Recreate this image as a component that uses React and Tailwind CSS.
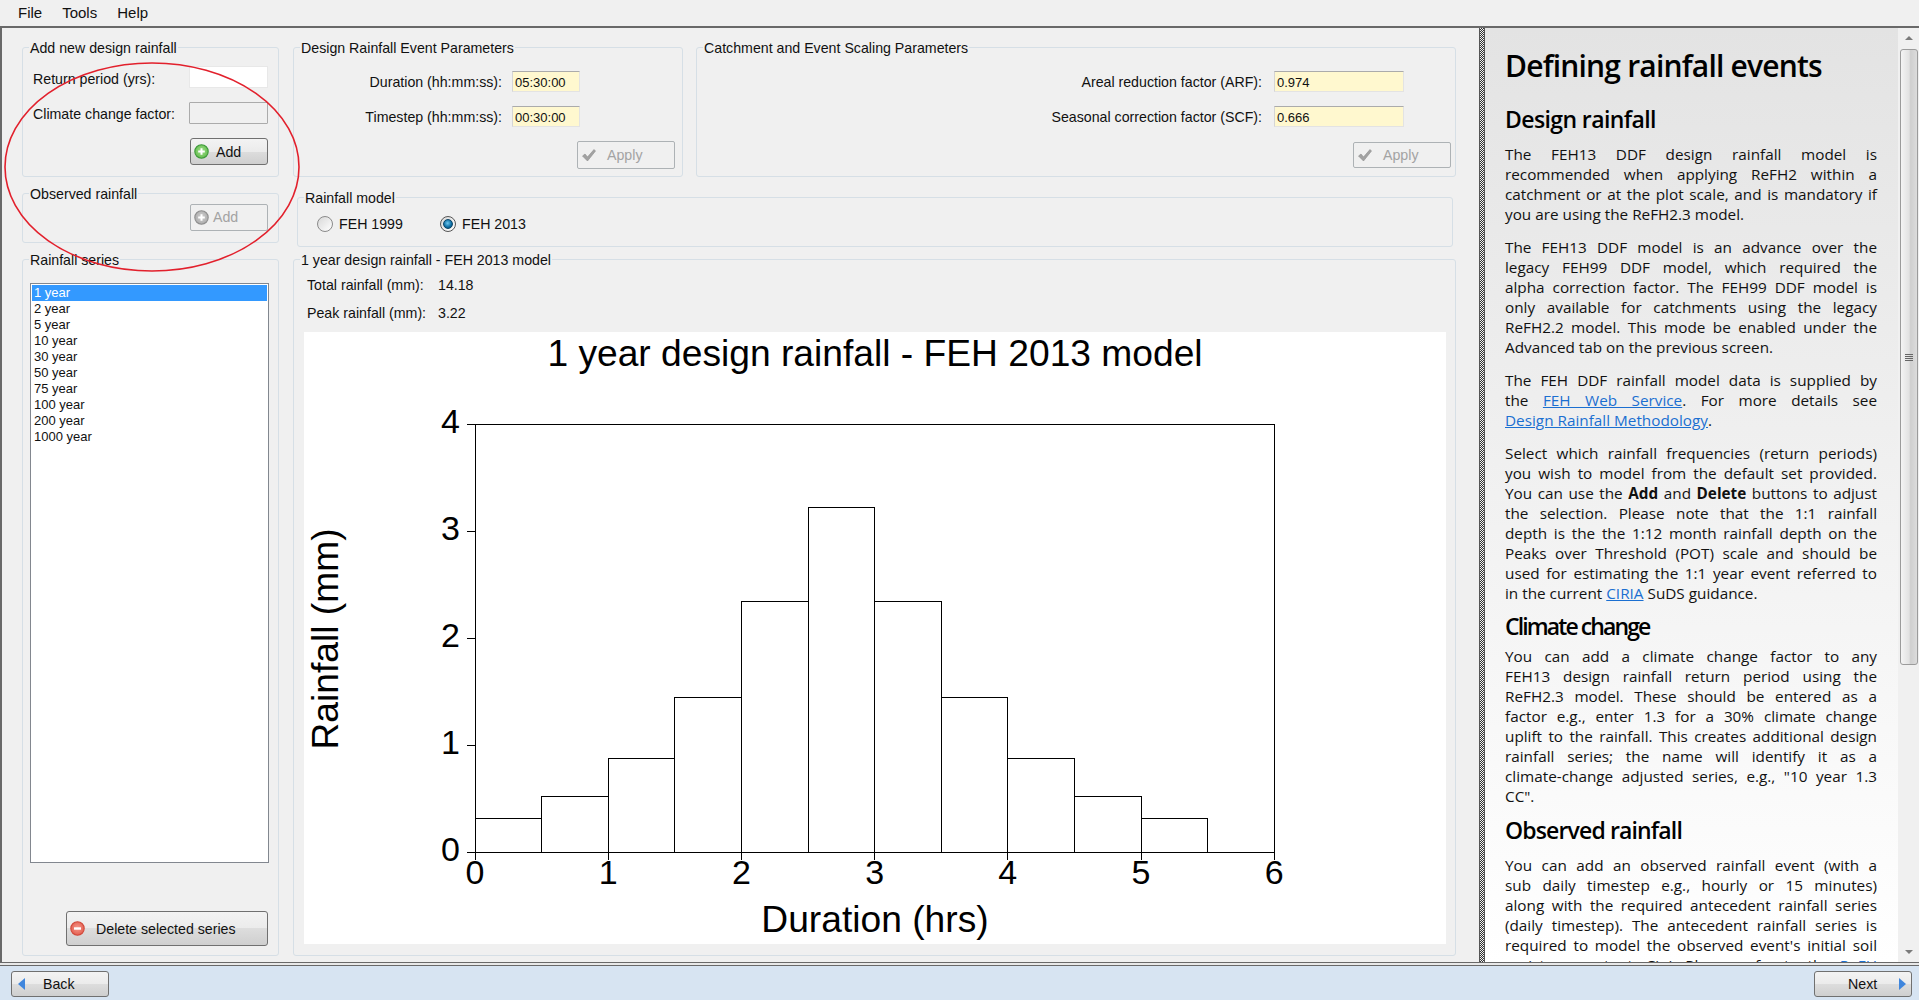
import React from "react";

const btnFace = "bg-[linear-gradient(#f3f3f3_0%,#ebebeb_50%,#dddddd_50%,#cfcfcf_100%)] border border-[#707070] rounded-[3px]";
const subHead = "text-[23px] leading-[28px] font-semibold text-black";

function Group({ title, className = "", children }) {
  return (
    <div className={`relative border border-[#d6dfe6] rounded-[3px] ${className}`}>
      <span className="absolute -top-[9px] left-[6px] bg-[#f0f0f0] px-[1px] leading-[18px] whitespace-nowrap">{title}</span>
      {children}
    </div>
  );
}

function Field({ children, className = "" }) {
  return (
    <div className={`h-[21px] border border-[#e3e3e3] border-t-[#ababab] border-l-[#d5d5d5] leading-[21px] pl-[2px] text-[13px] ${className}`}>
      {children}
    </div>
  );
}

function CircleIcon({ fill, inner, ring, kind }) {
  return (
    <svg width="15" height="15" viewBox="0 0 15 15">
      <defs>
        <radialGradient id={`g-${kind}`} cx="50%" cy="45%" r="60%">
          <stop offset="0%" stopColor={inner} />
          <stop offset="100%" stopColor={fill} />
        </radialGradient>
      </defs>
      <circle cx="7.5" cy="7.5" r="6.7" fill={`url(#g-${kind})`} stroke={ring} strokeWidth="1.1" />
      {kind !== "del" && <path d="M7.5 4.2v6.6M4.2 7.5h6.6" stroke="#fff" strokeWidth="2" />}
      {kind === "del" && <path d="M4 7.5h7" stroke="#fff" strokeWidth="2.4" />}
    </svg>
  );
}

function Check() {
  return (
    <svg width="16" height="14" viewBox="0 0 16 14">
      <path d="M1.5 8l2.5-2 2.5 3L13 1.5l1.5 1.5L6.5 13z" fill="#a2a2a2" stroke="#8d8d8d" strokeWidth="0.6" />
    </svg>
  );
}

function ApplyButton({ className = "" }) {
  return (
    <div className={`flex items-center w-[98px] border border-[#adb2b5] rounded-[2px] text-[#a3a3a3] ${className}`}>
      <span className="ml-[3px] w-[26px] flex"><Check /></span>
      <span className="pt-[1px]">Apply</span>
    </div>
  );
}

function Radio({ checked }) {
  return (
    <span className={`w-[16px] h-[16px] rounded-full border bg-[linear-gradient(135deg,#d8d8d8,#ffffff)] flex items-center justify-center ${checked ? "border-[#555]" : "border-[#8a8a8a]"}`}>
      {checked && <span className="w-[10px] h-[10px] rounded-full border border-[#0a4568] bg-[radial-gradient(circle_at_45%_40%,#6cc6ee,#0c6ca2_60%,#0a4568)]" />}
    </span>
  );
}

function Chart() {
  const x0 = 171, y0 = 520, ux = 133.2, uy = 107;
  const bars = [0.31, 0.52, 0.87, 1.44, 2.34, 3.22, 2.34, 1.44, 0.87, 0.52, 0.31];
  return (
    <svg width="1141" height="612" className="block" fontFamily="'Liberation Sans', sans-serif" fill="#000">
      <text x="571" y="34" fontSize="37.2" textAnchor="middle">1 year design rainfall - FEH 2013 model</text>
      <text x="571" y="600" fontSize="37.2" textAnchor="middle">Duration (hrs)</text>
      <text transform="translate(34 307) rotate(-90)" fontSize="37.2" textAnchor="middle">Rainfall (mm)</text>
      <g stroke="#000" strokeWidth="1" fill="none" shapeRendering="crispEdges">
        <path d={`M${x0} ${y0 - 4 * uy}H${x0 + 6 * ux}V${y0}H${x0}Z`} />
        {bars.map((v, i) => (
          <rect key={i} x={x0 + (i * ux) / 2} y={y0 - v * uy} width={ux / 2} height={v * uy} />
        ))}
        {[0, 1, 2, 3, 4].map((n) => (
          <path key={n} d={`M${x0 - 8} ${y0 - n * uy}H${x0}`} />
        ))}
        {[0, 1, 2, 3, 4, 5, 6].map((n) => (
          <path key={n} d={`M${x0 + n * ux} ${y0}v8`} />
        ))}
      </g>
      {[0, 1, 2, 3, 4].map((n) => (
        <text key={n} x="156" y={y0 - n * uy + 9} fontSize="34" textAnchor="end">{n}</text>
      ))}
      {[0, 1, 2, 3, 4, 5, 6].map((n) => (
        <text key={n} x={x0 + n * ux} y="552" fontSize="34" textAnchor="middle">{n}</text>
      ))}
    </svg>
  );
}

function Para({ lines }) {
  return (
    <div className="mb-[13px]">
      {lines.map((l, i) => (
        <div key={i} className={i < lines.length - 1 ? "text-justify [text-align-last:justify] whitespace-nowrap" : "whitespace-nowrap"}>{l}</div>
      ))}
    </div>
  );
}

function Lnk({ children }) {
  return <span className="text-[#1b6fd1] underline">{children}</span>;
}

function Help() {
  return (
    <div className="flex-1 min-w-0 flex bg-[#f0f0f0] overflow-hidden">
      <div className="w-[413px] shrink-0 bg-[linear-gradient(#e3e3e3,#ffffff)] pl-[20px] pr-[21px] overflow-hidden font-['Open_Sans',sans-serif] text-[15.3px] leading-[20px] text-[#111]">
        <h1 className="text-[30px] leading-[40px] font-semibold mt-[18px] mb-[19px] text-black tracking-[-0.8px] whitespace-nowrap">Defining rainfall events</h1>
        <h2 className={`${subHead} tracking-[-0.6px] mb-[11px]`}>Design rainfall</h2>
        <Para lines={[
          "The FEH13 DDF design rainfall model is",
          "recommended when applying ReFH2 within a",
          "catchment or at the plot scale, and is mandatory if",
          "you are using the ReFH2.3 model.",
        ]} />
        <Para lines={[
          "The FEH13 DDF model is an advance over the",
          "legacy FEH99 DDF model, which required the",
          "alpha correction factor. The FEH99 DDF model is",
          "only available for catchments using the legacy",
          "ReFH2.2 model. This mode be enabled under the",
          "Advanced tab on the previous screen.",
        ]} />
        <Para lines={[
          "The FEH DDF rainfall model data is supplied by",
          <>the <Lnk>FEH Web Service</Lnk>. For more details see</>,
          <><Lnk>Design Rainfall Methodology</Lnk>.</>,
        ]} />
        <Para lines={[
          "Select which rainfall frequencies (return periods)",
          "you wish to model from the default set provided.",
          <>You can use the <b>Add</b> and <b>Delete</b> buttons to adjust</>,
          "the selection. Please note that the 1:1 rainfall",
          "depth is the the 1:12 month rainfall depth on the",
          "Peaks over Threshold (POT) scale and should be",
          "used for estimating the 1:1 year event referred to",
          <>in the current <Lnk>CIRIA</Lnk> SuDS guidance.</>,
        ]} />
        <h2 className={`${subHead} tracking-[-1.9px] -mt-[4px] mb-[6px]`}>Climate change</h2>
        <Para lines={[
          "You can add a climate change factor to any",
          "FEH13 design rainfall return period using the",
          "ReFH2.3 model. These should be entered as a",
          "factor e.g., enter 1.3 for a 30% climate change",
          "uplift to the rainfall. This creates additional design",
          "rainfall series; the name will identify it as a",
          "climate-change adjusted series, e.g., \"10 year 1.3",
          "CC\".",
        ]} />
        <h2 className={`${subHead} tracking-[-0.85px] -mt-[3px] mb-[11px]`}>Observed rainfall</h2>
        <Para lines={[
          "You can add an observed rainfall event (with a",
          "sub daily timestep e.g., hourly or 15 minutes)",
          "along with the required antecedent rainfall series",
          "(daily timestep). The antecedent rainfall series is",
          "required to model the observed event's initial soil",
          <>moisture content, Cini. Please refer to the <Lnk>ReFH</Lnk></>,
          "",
        ]} />
      </div>
      <div className="flex-1 flex flex-col items-center bg-[#f0f0f0] pt-[8px] pb-[8px]">
        <span className="w-0 h-0 border-x-[4px] border-x-transparent border-b-[4px] border-b-[#7a7a7a]" />
        <div className="mt-[9px] w-[18px] h-[616px] border border-[#9b9b9b] rounded-[3px] bg-[linear-gradient(90deg,#f4f4f4_0%,#e2e2e2_50%,#cfcfcf_60%,#dcdcdc_100%)] flex items-center justify-center">
          <span className="flex flex-col gap-[1px]">
            <span className="w-[8px] h-[1px] bg-[#666]" />
            <span className="w-[8px] h-[1px] bg-[#666]" />
            <span className="w-[8px] h-[1px] bg-[#666]" />
            <span className="w-[8px] h-[1px] bg-[#666]" />
          </span>
        </div>
        <div className="flex-1" />
        <span className="w-0 h-0 border-x-[4px] border-x-transparent border-t-[4px] border-t-[#7a7a7a]" />
      </div>
    </div>
  );
}

export default function App() {
  const series = ["1 year", "2 year", "5 year", "10 year", "30 year", "50 year", "75 year", "100 year", "200 year", "1000 year"];
  return (
    <div className="relative w-[1919px] h-[1000px] overflow-hidden flex flex-col bg-[#f0f0f0] text-[14.2px] text-[#111] font-['Liberation_Sans',Arial,sans-serif]">
      {/* menu */}
      <div className="h-[26px] shrink-0 flex items-center pl-[18px] gap-[20px] text-[15px]">
        <span>File</span>
        <span>Tools</span>
        <span>Help</span>
      </div>
      <div className="h-[2px] shrink-0 bg-[#696969]" />

      {/* main */}
      <div className="flex-1 min-h-0 flex">
        <div className="w-[1479px] shrink-0 flex border-l-2 border-[#696969] pl-[20px] pt-[19px] pb-[6px] gap-[14px]">
          <div className="w-[257px] flex flex-col gap-[16px]">
            <Group title="Add new design rainfall" className="h-[130px] pl-[10px] pr-[10px] pt-[18px]">
              <div className="flex items-center justify-between h-[22px]">
                <span className="pt-[5px]">Return period (yrs):</span>
                <div className="w-[79px] h-[22px] bg-white border border-[#e8e8e8]" />
              </div>
              <div className="flex items-center justify-between h-[22px] mt-[14px]">
                <span className="pt-[4px]">Climate change factor:</span>
                <div className="w-[79px] h-[22px] border border-[#ababab] rounded-[1px]" />
              </div>
              <div className="flex justify-end mt-[14px]">
                <div className={`w-[78px] h-[27px] flex items-center ${btnFace}`}>
                  <span className="ml-[3px] flex"><CircleIcon fill="#62b94a" inner="#9ee08a" ring="#3d9a3a" kind="add" /></span>
                  <span className="ml-[7px] pt-[2px]">Add</span>
                </div>
              </div>
            </Group>
            <Group title="Observed rainfall" className="h-[50px] pr-[10px] pt-[10px] flex justify-end">
              <div className="w-[78px] h-[27px] flex items-center border border-[#adb2b5] rounded-[2px] text-[#a3a3a3]">
                <span className="ml-[3px] flex"><CircleIcon fill="#a9a9a9" inner="#cfcfcf" ring="#8f8f8f" kind="off" /></span>
                <span className="ml-[4px]">Add</span>
              </div>
            </Group>
            <Group title="Rainfall series" className="flex-1 pl-[7px] pr-[9px] pt-[23px] pb-[9px] flex flex-col">
              <div className="h-[580px] border border-[#82878f] bg-white p-[1px] text-[13px] leading-[16px]">
                {series.map((s, i) => (
                  <div key={s} className={i === 0 ? "bg-[#3399ff] text-white pl-[2px]" : "pl-[2px]"}>{s}</div>
                ))}
              </div>
              <div className="flex-1 flex items-end justify-end pr-[1px]">
                <div className={`w-[202px] h-[35px] flex items-center ${btnFace}`}>
                  <span className="ml-[3px] flex"><CircleIcon fill="#e2584a" inner="#f59a8c" ring="#d14a3c" kind="del" /></span>
                  <span className="ml-[11px] pt-[3px]">Delete selected series</span>
                </div>
              </div>
            </Group>
          </div>

          <div className="w-[1163px] flex flex-col">
            <div className="flex gap-[13px]">
              <Group title="Design Rainfall Event Parameters" className="w-[390px] h-[130px] pt-[23px]">
                <div className="flex justify-end items-center h-[21px] gap-[10px] mr-[102px]">
                  <span className="pt-[3px]">Duration (hh:mm:ss):</span>
                  <Field className="w-[68px] bg-[#fff8cf]">05:30:00</Field>
                </div>
                <div className="flex justify-end items-center h-[21px] gap-[10px] mr-[102px] mt-[14px]">
                  <span className="pt-[3px]">Timestep (hh:mm:ss):</span>
                  <Field className="w-[68px] bg-[#fff8cf]">00:30:00</Field>
                </div>
                <div className="flex justify-end mr-[7px] mt-[14px]">
                  <ApplyButton className="h-[28px]" />
                </div>
              </Group>
              <Group title="Catchment and Event Scaling Parameters" className="w-[760px] h-[130px] pt-[23px]">
                <div className="flex justify-end items-center h-[21px] gap-[12px] mr-[51px]">
                  <span className="pt-[3px]">Areal reduction factor (ARF):</span>
                  <Field className="w-[130px] bg-[#fff8cf]">0.974</Field>
                </div>
                <div className="flex justify-end items-center h-[21px] gap-[12px] mr-[51px] mt-[14px]">
                  <span className="pt-[3px]">Seasonal correction factor (SCF):</span>
                  <Field className="w-[130px] bg-[#fff8cf]">0.666</Field>
                </div>
                <div className="flex justify-end mr-[4px] mt-[15px]">
                  <ApplyButton className="h-[26px]" />
                </div>
              </Group>
            </div>
            <Group title="Rainfall model" className="mt-[20px] ml-[4px] mr-[3px] h-[50px] pl-[19px] pt-[5px] flex items-center">
              <div className="w-[123px] flex items-center gap-[6px]">
                <Radio />
                <span>FEH 1999</span>
              </div>
              <div className="flex items-center gap-[6px]">
                <Radio checked />
                <span>FEH 2013</span>
              </div>
            </Group>
            <Group title="1 year design rainfall - FEH 2013 model" className="mt-[12px] flex-1 pl-[10px] pr-[9px] pt-[16px] pb-[11px] flex flex-col">
              <div className="flex h-[18px] items-center pl-[3px] pt-[2px]">
                <span className="w-[131px]">Total rainfall (mm):</span>
                <span>14.18</span>
              </div>
              <div className="flex h-[18px] items-center pl-[3px] pt-[2px] mt-[10px]">
                <span className="w-[131px]">Peak rainfall (mm):</span>
                <span>3.22</span>
              </div>
              <div className="mt-[10px] flex-1 min-h-0 bg-white">
                <Chart />
              </div>
            </Group>
          </div>
        </div>

        {/* splitter */}
        <div className="w-[6px] shrink-0 border-x border-[#555] bg-[repeating-conic-gradient(#333_0_25%,#f0f0f0_0_50%)] bg-[length:2px_2px]" />

        <Help />
      </div>

      {/* footer */}
      <div className="h-[38px] shrink-0 flex flex-col">
        <div className="h-[4px] border-y border-[#696969] bg-[#e8e8e8]" />
        <div className="flex-1 bg-[#d7e4f2] flex justify-between items-start pt-[5px] pl-[11px] pr-[7px]">
          <div className={`w-[98px] h-[26px] flex items-center ${btnFace}`}>
            <span className="ml-[6px] w-0 h-0 border-y-[6px] border-y-transparent border-r-[7px] border-r-[#3f86dd]" />
            <span className="ml-[18px] pt-[2px]">Back</span>
          </div>
          <div className={`w-[98px] h-[26px] flex items-center ${btnFace}`}>
            <span className="ml-[33px] pt-[2px]">Next</span>
            <span className="ml-[22px] w-0 h-0 border-y-[6px] border-y-transparent border-l-[7px] border-l-[#3f86dd]" />
          </div>
        </div>
      </div>

      {/* hand-drawn annotation over the form */}
      <svg className="absolute left-0 top-0 pointer-events-none" width="310" height="280">
        <ellipse cx="152" cy="167" rx="147" ry="104" fill="none" stroke="#e2202c" strokeWidth="1.6" />
      </svg>
    </div>
  );
}
